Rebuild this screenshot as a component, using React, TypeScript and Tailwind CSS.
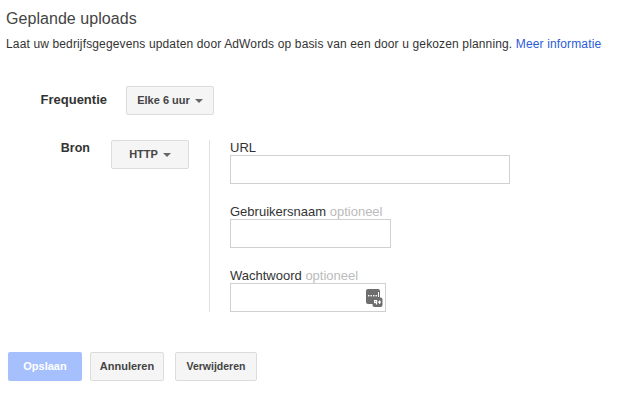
const font = "font-['Liberation_Sans',Arial,sans-serif]";
const btn =
  "h-[29px] flex items-center justify-center rounded-[2px] border border-[#dcdcdc] bg-[#f5f5f5] font-bold text-[#444]";

function Caret() {
  return <span className="ml-[5px] mt-[1px] w-0 h-0 border-x-[4px] border-x-transparent border-t-[4px] border-t-[#666]" />;
}

function PasswordIcon() {
  return (
    <svg width="17" height="18" viewBox="0 0 17 18" className="mt-[5px] mr-[2px]">
      <rect x="0" y="0" width="14" height="15" rx="2" fill="#6e6e6e" />
      <rect x="6.5" y="8.5" width="10" height="9.5" rx="2" fill="#6e6e6e" />
      <rect x="2" y="6" width="1.4" height="1.4" fill="#fff" />
      <rect x="4.5" y="6" width="1.4" height="1.4" fill="#fff" />
      <rect x="7" y="6" width="1.4" height="1.4" fill="#fff" />
      <rect x="9.5" y="6" width="1.4" height="1.4" fill="#fff" />
      <rect x="12" y="3" width="1" height="5" fill="#fff" />
      <rect x="8" y="11" width="3" height="1.2" fill="#fff" />
      <rect x="8" y="11" width="1.2" height="3" fill="#fff" />
      <rect x="10" y="11" width="1.2" height="4.5" fill="#fff" />
      <rect x="8" y="13" width="3" height="1.2" fill="#fff" />
      <rect x="12" y="12.5" width="3" height="1.2" fill="#fff" />
      <rect x="13" y="11.5" width="1.2" height="3.4" fill="#fff" />
    </svg>
  );
}

function Field({ label, optional, width, children }: { label: string; optional?: boolean; width: string; children?: React.ReactNode }) {
  return (
    <div>
      <div className="h-[15px] text-[13px] leading-[15px] text-[#333] whitespace-nowrap">
        {label}
        {optional && <span className="text-[#bbb]"> optioneel</span>}
      </div>
      <div className={`${width} h-[29px] border border-[#d0d0d0] bg-white flex justify-end`}>{children}</div>
    </div>
  );
}

export default function App() {
  return (
    <div className={`${font} w-[639px] h-[402px] bg-white relative overflow-hidden pl-[6px]`}>
      <h1 className="pt-[10px] text-[16px] leading-[18px] tracking-[0.05px] text-[#444] font-normal">Geplande uploads</h1>
      <p className="mt-[8px] text-[12px] leading-[16px] text-[#333] whitespace-nowrap tracking-[0.14px]">
        Laat uw bedrijfsgegevens updaten door AdWords op basis van een door u gekozen planning.{" "}
        <a className="text-[#2a5bd7]">Meer informatie</a>
      </p>

      <div className="mt-[34px] flex">
        <div className="w-[101px] text-right text-[13px] font-bold text-[#333] leading-[15px] pt-[6px]">Frequentie</div>
        <div className={`${btn} ml-[19px] w-[88px] text-[11px]`}>
          Elke 6 uur
          <Caret />
        </div>
      </div>

      <div className="mt-[25px] flex">
        <div className="w-[84px] text-right text-[12.5px] font-bold text-[#333] leading-[15px] pt-[1px]">Bron</div>
        <div className={`${btn} ml-[21px] w-[78px] text-[11px]`}>
          HTTP
          <Caret />
        </div>
        <div className="ml-[20px] pl-[20px] border-l border-[#e0e0e0] h-[172px] flex flex-col gap-[20px]">
          <Field label="URL" width="w-[280px]" />
          <Field label="Gebruikersnaam" optional width="w-[161px]" />
          <Field label="Wachtwoord" optional width="w-[156px]">
            <PasswordIcon />
          </Field>
        </div>
      </div>

      <div className="mt-[40px] ml-[2px] flex">
        <div className="h-[29px] w-[74px] flex items-center justify-center rounded-[2px] bg-[#a6c0fd] text-[11px] font-bold text-white">Opslaan</div>
        <div className={`${btn} ml-[8px] w-[74px] text-[11px]`}>Annuleren</div>
        <div className={`${btn} ml-[11px] w-[82px] text-[10.5px]`}>Verwijderen</div>
      </div>
    </div>
  );
}
